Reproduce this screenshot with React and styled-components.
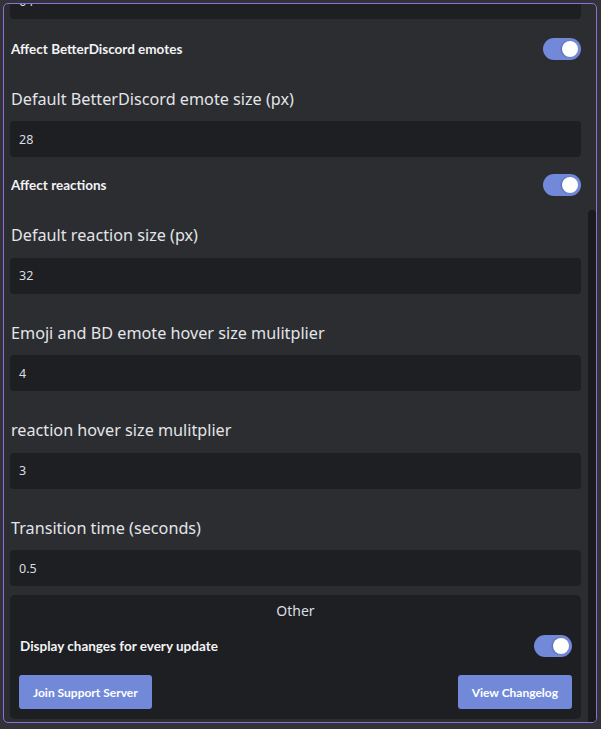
import React from 'react';
import styled, { createGlobalStyle } from 'styled-components';

const GlobalStyle = createGlobalStyle`
  html, body {
    margin: 0;
    padding: 0;
    background: #313338;
  }
  * {
    box-sizing: border-box;
  }
`;

const Page = styled.div`
  width: 601px;
  height: 729px;
  padding: 3px 4px 0 3px;
`;

const Modal = styled.div`
  display: flex;
  height: 720px;
  border: 1px solid #8c6fd9;
  border-radius: 5px;
  background: #2b2d31;
  overflow: hidden;
`;

const Scroller = styled.div`
  flex: 1;
  display: flex;
  flex-direction: column;
  padding: 0 7px 0 6px;
  font-family: 'Noto Sans', 'Open Sans', sans-serif;
`;

const ScrollTrack = styled.div`
  width: 8px;
  padding-top: 206px;
`;

const Thumb = styled.div`
  height: 100%;
  background: #1a1b1e;
  border-radius: 4px 4px 0 0;
`;

const Input = styled.div`
  flex-shrink: 0;
  height: 36px;
  margin-top: ${(p) => p.$top ?? 0}px;
  padding: 0 9px;
  display: flex;
  align-items: center;
  background: #1e1f22;
  border-radius: 4px;
  color: #dbdee1;
  font-size: 12.5px;
`;

const ToggleRow = styled.div`
  display: flex;
  align-items: center;
  justify-content: space-between;
  margin-top: ${(p) => p.$top ?? 0}px;
  padding-left: 1px;
`;

const Label = styled.span`
  font-family: 'Lato', 'Noto Sans', sans-serif;
  font-weight: 700;
  font-size: 13.5px;
  color: #f2f3f5;
`;

const Heading = styled.div`
  margin: ${(p) => p.$top ?? 28}px 0 11px 1px;
  line-height: 22.4px;
  font-size: 16.2px;
  color: #e3e5e8;
`;

const Switch = styled.div`
  position: relative;
  width: 38px;
  height: 22px;
  border-radius: 11px;
  background: #7289da;

  &::after {
    content: '';
    position: absolute;
    top: 3px;
    right: 3px;
    width: 16px;
    height: 16px;
    border-radius: 50%;
    background: #ffffff;
    box-shadow: -1px 0 2px rgba(0, 0, 0, 0.25);
  }
`;

const Panel = styled.div`
  margin-top: 9px;
  padding: 7px 9px 10px;
  background: #1e1f22;
  border-radius: 5px;
  display: flex;
  flex-direction: column;
`;

const PanelTitle = styled.div`
  text-align: center;
  line-height: 18px;
  font-size: 14px;
  color: #dbdee1;
`;

const ButtonRow = styled.div`
  display: flex;
  justify-content: space-between;
  margin-top: 18px;
`;

const Button = styled.button`
  height: 34px;
  padding: 0 14px;
  border: none;
  border-radius: 3px;
  background: #7289da;
  color: #ffffff;
  font-family: 'Lato', 'Noto Sans', sans-serif;
  font-weight: 700;
  font-size: 12px;
  cursor: pointer;
`;

const settings = [
  { label: 'Default reaction size (px)', value: '32' },
  { label: 'Emoji and BD emote hover size mulitplier', value: '4' },
  { label: 'reaction hover size mulitplier', value: '3' },
  { label: 'Transition time (seconds)', value: '0.5' },
];

export default function App() {
  return (
    <Page>
      <GlobalStyle />
      <Modal>
        <Scroller>
          <Input $top={-21}>64</Input>
          <ToggleRow $top={19}>
            <Label>Affect BetterDiscord emotes</Label>
            <Switch />
          </ToggleRow>
          <Heading $top={28}>Default BetterDiscord emote size (px)</Heading>
          <Input>28</Input>
          <ToggleRow $top={17}>
            <Label>Affect reactions</Label>
            <Switch />
          </ToggleRow>
          {settings.map((s) => (
            <React.Fragment key={s.label}>
              <Heading>{s.label}</Heading>
              <Input>{s.value}</Input>
            </React.Fragment>
          ))}
          <Panel>
            <PanelTitle>Other</PanelTitle>
            <ToggleRow $top={15}>
              <Label>Display changes for every update</Label>
              <Switch />
            </ToggleRow>
            <ButtonRow>
              <Button>Join Support Server</Button>
              <Button>View Changelog</Button>
            </ButtonRow>
          </Panel>
        </Scroller>
        <ScrollTrack>
          <Thumb />
        </ScrollTrack>
      </Modal>
    </Page>
  );
}
